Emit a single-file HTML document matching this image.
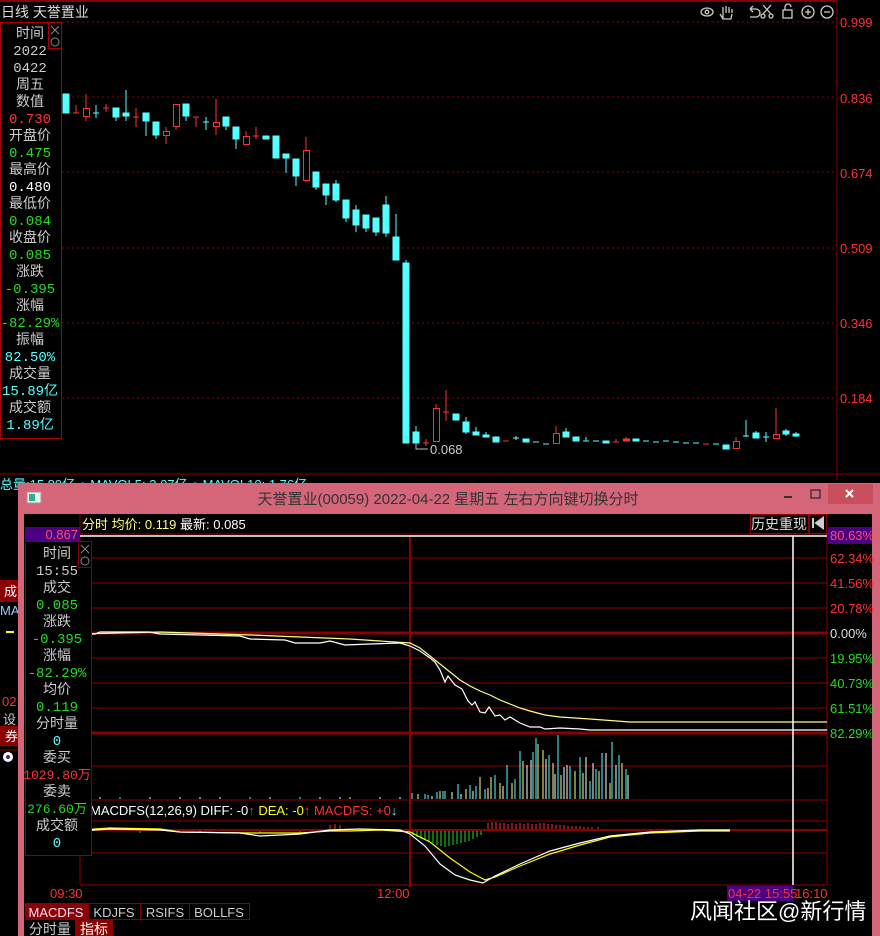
<!DOCTYPE html>
<html><head><meta charset="utf-8"><style>
html,body{margin:0;padding:0;background:#000;width:880px;height:936px;overflow:hidden}
svg{display:block}
text{font-family:"Liberation Sans","Noto Sans CJK SC",sans-serif}
.m text{font-family:"Liberation Mono","Noto Sans CJK SC",monospace}
</style></head><body>
<svg width="880" height="936" viewBox="0 0 880 936" xmlns="http://www.w3.org/2000/svg" font-size="13">
<rect width="880" height="936" fill="#000"/>
<line x1="0" y1="1" x2="836" y2="1" stroke="#8b0000" stroke-width="2"/>
<text x="1" y="17" fill="#ddd" font-size="14">日线  天誉置业</text>
<g stroke="#ccc" fill="none" stroke-width="1.3">
<ellipse cx="707" cy="12" rx="6" ry="4"/><circle cx="707" cy="12" r="1.8"/>
<path d="M723 19v-6m0 0v-6m3 6v-7m3 7v-6m3 6v-4m-12 5l3 5h8l1-5"/>
<path d="M750 9h6a4 4 0 010 8h-6m0-8l3-3m-3 3l3 3"/>
<path d="M763 5l8 9m0-9l-8 9"/><circle cx="763" cy="16" r="2"/><circle cx="771" cy="16" r="2"/>
<rect x="783" y="10" width="9" height="8"/><path d="M785 10v-3a3 3 0 016 0"/>
<circle cx="808" cy="12" r="6"/><path d="M805 12h6m-3-3v6"/>
<circle cx="827" cy="12" r="6"/><path d="M824 12h6"/>
</g>
<line x1="837" y1="0" x2="837" y2="480" stroke="#8b0000"/>
<g stroke="#8b0000" stroke-dasharray="2,3">
<line x1="62" y1="22" x2="836" y2="22"/><line x1="62" y1="97" x2="836" y2="97"/>
<line x1="62" y1="172" x2="836" y2="172"/><line x1="62" y1="248" x2="836" y2="248"/>
<line x1="62" y1="323" x2="836" y2="323"/><line x1="62" y1="398" x2="836" y2="398"/>
</g>
<line x1="0" y1="474" x2="880" y2="474" stroke="#8b0000"/>
<g fill="#ff3232" font-size="13">
<text x="840" y="27">0.999</text><text x="840" y="103">0.836</text><text x="840" y="178">0.674</text>
<text x="840" y="253">0.509</text><text x="840" y="328">0.346</text><text x="840" y="403">0.184</text>
</g>
<g stroke="#54ffff" fill="#54ffff">
<line x1="66" y1="94" x2="66" y2="113"/><rect x="63" y="94" width="6" height="19"/>
<line x1="96" y1="105" x2="96" y2="118"/><line x1="93" y1="113" x2="99" y2="113"/>
<rect x="113" y="108" width="6" height="9"/><line x1="116" y1="117" x2="116" y2="121"/>
<line x1="126" y1="90" x2="126" y2="121"/><rect x="123" y="113" width="6" height="3"/>
<line x1="146" y1="121" x2="146" y2="136"/><rect x="143" y="113" width="6" height="8"/>
<line x1="156" y1="135" x2="156" y2="139"/><rect x="153" y="122" width="6" height="13"/>
<line x1="186" y1="116" x2="186" y2="121"/><rect x="183" y="104" width="6" height="12"/>
<line x1="206" y1="117" x2="206" y2="130"/><line x1="203" y1="122" x2="209" y2="122"/>
<line x1="226" y1="126" x2="226" y2="130"/><rect x="223" y="117" width="6" height="9"/>
<line x1="236" y1="139" x2="236" y2="149"/><rect x="233" y="127" width="6" height="12"/>
<rect x="263" y="136" width="6" height="3"/>
<rect x="273" y="136" width="6" height="22"/>
<line x1="286" y1="158" x2="286" y2="173"/><rect x="283" y="154" width="6" height="4"/>
<line x1="296" y1="176" x2="296" y2="186"/><rect x="293" y="159" width="6" height="17"/>
<line x1="316" y1="187" x2="316" y2="190"/><rect x="313" y="172" width="6" height="15"/>
<line x1="326" y1="195" x2="326" y2="205"/><rect x="323" y="184" width="6" height="11"/>
<line x1="336" y1="180" x2="336" y2="202"/><rect x="333" y="184" width="6" height="16"/>
<line x1="346" y1="218" x2="346" y2="222"/><rect x="343" y="200" width="6" height="18"/>
<line x1="356" y1="205" x2="356" y2="232"/><rect x="353" y="210" width="6" height="15"/>
<line x1="366" y1="228" x2="366" y2="232"/><rect x="363" y="215" width="6" height="13"/>
<line x1="376" y1="232" x2="376" y2="236"/><rect x="373" y="218" width="6" height="14"/>
<line x1="386" y1="196" x2="386" y2="237"/><rect x="383" y="205" width="6" height="28"/>
<line x1="396" y1="214" x2="396" y2="260"/><rect x="393" y="237" width="6" height="23"/>
<line x1="406" y1="260" x2="406" y2="443"/><rect x="403" y="263" width="6" height="180"/>
<line x1="416" y1="426" x2="416" y2="443"/><rect x="413" y="432" width="6" height="11"/>
<rect x="453" y="414" width="6" height="6"/>
<line x1="466" y1="417" x2="466" y2="434"/><rect x="463" y="422" width="6" height="10"/>
<line x1="476" y1="427" x2="476" y2="435"/><rect x="473" y="432" width="6" height="3"/>
<line x1="486" y1="432" x2="486" y2="437"/><rect x="483" y="435" width="6" height="2"/>
<rect x="493" y="437" width="6" height="5"/>
<line x1="513" y1="438" x2="519" y2="438"/><line x1="516" y1="436" x2="516" y2="440"/>
<rect x="523" y="439" width="6" height="3"/>
<line x1="533" y1="442" x2="539" y2="442"/><line x1="543" y1="444" x2="549" y2="444"/>
<line x1="566" y1="428" x2="566" y2="437"/><rect x="563" y="432" width="6" height="5"/>
<rect x="573" y="437" width="6" height="4"/>
<line x1="586" y1="437" x2="586" y2="441"/><line x1="583" y1="441" x2="589" y2="441"/>
<line x1="593" y1="441" x2="599" y2="441"/><rect x="603" y="441" width="6" height="2"/>
<rect x="633" y="439" width="6" height="2"/><line x1="643" y1="441" x2="649" y2="441"/>
<line x1="653" y1="442" x2="659" y2="442"/><line x1="663" y1="441" x2="669" y2="441"/>
<line x1="673" y1="442" x2="679" y2="442"/><line x1="683" y1="443" x2="689" y2="443"/>
<line x1="693" y1="443" x2="699" y2="443"/><line x1="713" y1="444" x2="719" y2="444"/>
<rect x="723" y="445" width="6" height="4"/>
<line x1="746" y1="420" x2="746" y2="437"/><line x1="743" y1="436" x2="749" y2="436"/>
<line x1="756" y1="431" x2="756" y2="438"/><rect x="753" y="433" width="6" height="5"/>
<line x1="766" y1="432" x2="766" y2="442"/><line x1="763" y1="437" x2="769" y2="437"/>
<line x1="786" y1="429" x2="786" y2="436"/><rect x="783" y="431" width="6" height="3"/>
<line x1="796" y1="432" x2="796" y2="437"/><rect x="793" y="434" width="6" height="2"/>
</g>
<g stroke="#ff3232" fill="none">
<line x1="76" y1="105" x2="76" y2="113"/><line x1="73" y1="113" x2="79" y2="113"/>
<line x1="86" y1="94" x2="86" y2="121"/><rect x="83.5" y="108.5" width="6" height="8" fill="#000"/>
<line x1="106" y1="104" x2="106" y2="112"/><line x1="103" y1="108" x2="109" y2="108"/>
<line x1="136" y1="108" x2="136" y2="127"/><line x1="133" y1="117" x2="139" y2="117"/>
<line x1="166" y1="127" x2="166" y2="144"/><rect x="163.5" y="131.5" width="6" height="4" fill="#000"/>
<line x1="176" y1="104" x2="176" y2="130"/><rect x="173.5" y="104.5" width="6" height="22" fill="#000"/>
<line x1="196" y1="117" x2="196" y2="127"/><line x1="193" y1="117" x2="199" y2="117"/>
<line x1="216" y1="99" x2="216" y2="135"/><rect x="213.5" y="122.5" width="6" height="4" fill="#000"/>
<line x1="246" y1="131" x2="246" y2="144"/><rect x="243.5" y="136.5" width="6" height="8" fill="#000"/>
<line x1="256" y1="127" x2="256" y2="139"/><line x1="253" y1="136" x2="259" y2="136"/>
<line x1="306" y1="137" x2="306" y2="182"/><rect x="303.5" y="150.5" width="6" height="30" fill="#000"/>
<line x1="426" y1="439" x2="426" y2="446"/><line x1="423" y1="443" x2="429" y2="443"/>
<line x1="436" y1="404" x2="436" y2="442"/><rect x="433.5" y="408.5" width="6" height="33" fill="#000"/>
<line x1="446" y1="390" x2="446" y2="421"/><line x1="443" y1="412" x2="449" y2="412"/>
<line x1="503" y1="441" x2="509" y2="441"/>
<line x1="556" y1="426" x2="556" y2="444"/><rect x="553.5" y="433.5" width="6" height="10" fill="#000"/>
<line x1="616" y1="439" x2="616" y2="442"/><line x1="613" y1="442" x2="619" y2="442"/>
<line x1="626" y1="437" x2="626" y2="441"/><rect x="623.5" y="439" width="6" height="2" fill="#ff3232"/>
<line x1="703" y1="444" x2="709" y2="444"/>
<line x1="736" y1="437" x2="736" y2="449"/><rect x="733.5" y="441.5" width="6" height="7" fill="#000"/>
<line x1="776" y1="408" x2="776" y2="439"/><rect x="773.5" y="434.5" width="6" height="4" fill="#000"/>
</g>
<path d="M416 443v6h12" stroke="#bbb" fill="none"/>
<text x="430" y="454" fill="#ccc" font-size="13">0.068</text>
<rect x="0.5" y="22.5" width="61" height="416" fill="#000" stroke="#a00"/>
<rect x="48.5" y="22.5" width="13" height="26" fill="#000" stroke="#a00"/>
<path d="M51 26l8 8m0-8l-8 8" stroke="#888"/><circle cx="55" cy="42" r="4" stroke="#888" fill="none"/>
<g font-size="14" text-anchor="middle" class="m">
<text x="30" y="38" fill="#ccc">时间</text><text x="30" y="55" fill="#ccc">2022</text><text x="30" y="72" fill="#ccc">0422</text>
<text x="30" y="89" fill="#ccc">周五</text><text x="30" y="106" fill="#ccc">数值</text><text x="30" y="123" fill="#ff3232">0.730</text>
<text x="30" y="140" fill="#ccc">开盘价</text><text x="30" y="157" fill="#22dd22">0.475</text>
<text x="30" y="174" fill="#ccc">最高价</text><text x="30" y="191" fill="#fff">0.480</text>
<text x="30" y="208" fill="#ccc">最低价</text><text x="30" y="225" fill="#22dd22">0.084</text>
<text x="30" y="242" fill="#ccc">收盘价</text><text x="30" y="259" fill="#22dd22">0.085</text>
<text x="30" y="276" fill="#ccc">涨跌</text><text x="30" y="293" fill="#22dd22">-0.395</text>
<text x="30" y="310" fill="#ccc">涨幅</text><text x="30" y="327" fill="#22dd22">-82.29%</text>
<text x="30" y="344" fill="#ccc">振幅</text><text x="30" y="361" fill="#54ffff">82.50%</text>
<text x="30" y="378" fill="#ccc">成交量</text><text x="30" y="395" fill="#54ffff">15.89亿</text>
<text x="30" y="412" fill="#ccc">成交额</text><text x="30" y="429" fill="#54ffff">1.89亿</text>
</g>
<text x="0" y="489" fill="#54ffff" font-size="13">总量:15.89亿 ● MAVOL5: 3.07亿 ● MAVOL10: 1.76亿</text>
<rect x="0" y="580" width="18" height="22" fill="#8b0000"/><text x="4" y="596" fill="#fff" font-size="13">成</text>
<text x="0" y="615" fill="#9cf" font-size="13">MA</text>
<path d="M6 632h8" stroke="#ff0" stroke-width="2"/>
<text x="2" y="706" fill="#ff3232" font-size="13">02</text>
<text x="3" y="724" fill="#ccc" font-size="13">设</text>
<rect x="0" y="726" width="18" height="20" fill="#8b0000"/><text x="5" y="741" fill="#fff" font-size="13">券</text>
<circle cx="8" cy="757" r="5" fill="#fff"/><circle cx="8" cy="757" r="2" fill="#336"/>
<line x1="0" y1="750" x2="18" y2="750" stroke="#8b0000"/>
<rect x="18" y="483" width="862" height="453" fill="#d5667a"/>
<rect x="27" y="492" width="14" height="11" fill="#eee" stroke="#999"/><rect x="29" y="494" width="6" height="7" fill="#3a8"/>
<text x="448" y="504" fill="#333" font-size="15" text-anchor="middle">天誉置业(00059) 2022-04-22 星期五      左右方向键切换分时</text>
<path d="M784 497h8" stroke="#333" stroke-width="2"/>
<rect x="811" y="490" width="9" height="8" fill="none" stroke="#333" stroke-width="1.4"/>
<rect x="828" y="484" width="45" height="20" fill="#c94f5c"/>
<path d="M846 490l7 7m0-7l-7 7" stroke="#fff" stroke-width="2"/>
<rect x="24" y="514" width="848" height="422" fill="#000"/>
<line x1="80" y1="514" x2="80" y2="535" stroke="#8b0000"/>
<text x="82" y="529" fill="#ffff80" font-size="13">分时 均价: 0.119 <tspan fill="#fff">最新: 0.085</tspan></text>
<rect x="750.5" y="514.5" width="58" height="19" fill="#000" stroke="#8b0000"/>
<text x="779" y="529" fill="#ddd" font-size="14" text-anchor="middle">历史重现</text>
<rect x="809.5" y="514.5" width="17" height="19" fill="#000" stroke="#8b0000"/>
<path d="M813 518v10M823 518l-7 5 7 5z" stroke="#ccc" fill="#ccc" stroke-width="2"/>
<line x1="80" y1="534" x2="827" y2="534" stroke="#8b0000"/>
<rect x="25" y="527" width="55" height="14" fill="#4b0082"/>
<text x="78" y="539" fill="#ff4d6d" font-size="13" text-anchor="end">0.867</text>
<rect x="828" y="527" width="44" height="17" fill="#4b0082"/>
<g stroke="#8b0000">
<line x1="80" y1="558" x2="827" y2="558"/><line x1="80" y1="583" x2="827" y2="583"/>
<line x1="80" y1="608" x2="827" y2="608"/><line x1="80" y1="633" x2="827" y2="633" stroke-width="3"/>
<line x1="80" y1="658" x2="827" y2="658"/><line x1="80" y1="683" x2="827" y2="683"/>
<line x1="80" y1="708" x2="827" y2="708"/><line x1="80" y1="733" x2="827" y2="733" stroke-width="3"/>
<line x1="80" y1="766" x2="827" y2="766"/><line x1="24" y1="800" x2="827" y2="800"/>
<line x1="80" y1="821" x2="827" y2="821"/><line x1="80" y1="830" x2="827" y2="830" stroke-width="2"/>
<line x1="80" y1="853" x2="827" y2="853"/><line x1="80" y1="885" x2="827" y2="885"/>
<line x1="410" y1="536" x2="410" y2="887" stroke-width="2"/>
<line x1="827" y1="534" x2="827" y2="885"/>
<line x1="80" y1="534" x2="80" y2="885"/>
</g>
<line x1="80" y1="536" x2="827" y2="536" stroke="#fff" stroke-width="1.5"/>
<line x1="793" y1="536" x2="793" y2="885" stroke="#fff" stroke-width="1.5"/>
<g font-size="13">
<text x="830" y="540" fill="#ff4d6d">80.63%</text>
<text x="830" y="563" fill="#ff3232">62.34%</text><text x="830" y="588" fill="#ff3232">41.56%</text>
<text x="830" y="613" fill="#ff3232">20.78%</text><text x="830" y="638" fill="#ddd">0.00%</text>
<text x="830" y="663" fill="#22dd22">19.95%</text><text x="830" y="688" fill="#22dd22">40.73%</text>
<text x="830" y="713" fill="#22dd22">61.51%</text><text x="830" y="738" fill="#22dd22">82.29%</text>
</g>
<polyline fill="none" stroke="#ffff80" stroke-width="1.2" points="80,634 160,632 250,635 300,637 350,639 380,641 410,643 420,648 430,656 440,664 450,672 460,680 470,686 480,691 490,695 500,700 510,704 520,708 530,711 545,715 560,717 590,719 630,722 827,722"/>
<polyline fill="none" stroke="#fff" stroke-width="1.2" points="80,635 95,634 100,632 150,632 160,634 240,636 250,639 285,640 295,643 320,643 330,641 345,645 370,644 400,643 410,646 420,651 430,658 435,662 440,670 445,682 448,676 455,685 462,689 468,701 472,705 475,702 480,712 485,713 489,707 495,716 500,715 505,720 510,717 520,723 530,727 540,727 545,729 560,728 580,729 590,730 827,730"/>
<g stroke="#54ffff">
<path d="M412 799v-6M425 799v-5M437 799v-7M445 799v-8M458 799v-15M470 799v-14M476 799v-13M485 799v-10M495 799v-24M507 799v-34M515 799v-20M520 799v-48M533 799v-47M536 799v-61M549 799v-44M558 799v-64M570 799v-33M580 799v-42M596 799v-30M602 799v-46M612 799v-57M619 799v-44M626 799v-30M590 799v-18M443 799v-8M428 799v-4M120 799v-2M300 799v-2M250 799v-2"/>
</g>
<g stroke="#ffff80">
<path d="M418 799v-5M440 799v-8M466 799v-10M480 799v-22M491 799v-22M500 799v-16M512 799v-16M523 799v-38M538 799v-55M543 799v-49M553 799v-36M561 799v-24M575 799v-28M583 799v-26M599 799v-28M610 799v-16M622 799v-36M200 799v-2M350 799v-2"/>
</g>
<g stroke="#fff">
<path d="M432 799v-3M452 799v-7M461 799v-5M473 799v-8M488 799v-11M503 799v-13M527 799v-34M531 799v-39M546 799v-40M555 799v-25M564 799v-32M567 799v-34M586 799v-42M593 799v-36M606 799v-46M616 799v-34M628 799v-24M100 799v-2M150 799v-2M180 799v-2M220 799v-2M270 799v-2M320 799v-2M340 799v-2M380 799v-2M400 799v-2"/>
</g>
<text x="90" y="815" fill="#fff" font-size="13">MACDFS(12,26,9) DIFF: -0<tspan fill="#ff3232">↑</tspan> <tspan fill="#ffff00">DEA: -0</tspan><tspan fill="#ff3232">↑ MACDFS: +0</tspan><tspan fill="#54ffff">↓</tspan></text>
<g stroke="#22dd22">
<path d="M413 831v4M417 831v6M421 831v8M425 831v9M429 831v11M433 831v12M437 831v14M441 831v15M445 831v16M449 831v15M453 831v14M457 831v13M461 831v12M465 831v11M469 831v10M473 831v8M477 831v6M481 831v4M140 831v2M200 831v2M260 831v2M300 831v2"/>
</g>
<g stroke="#ff3232">
<path d="M488 829v-6M492 829v-7M496 829v-7M500 829v-6M504 829v-6M508 829v-5M512 829v-6M516 829v-5M520 829v-6M524 829v-5M528 829v-6M532 829v-5M536 829v-5M540 829v-6M544 829v-6M548 829v-5M552 829v-5M556 829v-4M560 829v-4M564 829v-4M568 829v-3M572 829v-3M576 829v-3M580 829v-3M584 829v-2M588 829v-2M592 829v-2M598 829v-2M330 829v-4M335 829v-5M340 829v-4M100 829v-1M110 829v-2"/>
</g>
<polyline fill="none" stroke="#ffff00" stroke-width="1.2" points="80,830 110,828 160,829 180,832 250,833 300,833 330,831 350,831 380,830 410,832 430,842 450,858 470,872 485,880 495,877 520,866 550,854 580,845 610,837 650,833 700,831 730,831"/>
<polyline fill="none" stroke="#fff" stroke-width="1.2" points="80,831 110,829 160,830 180,832 240,833 260,836 300,834 330,830 360,829 400,830 410,834 425,846 440,864 455,875 470,880 483,883 495,876 520,864 550,851 580,843 610,836 650,832 700,830 730,830"/>
<rect x="25.5" y="541.5" width="66" height="314" fill="#000" stroke="#8b0000"/>
<rect x="78.5" y="541.5" width="13" height="26" fill="#000" stroke="#8b0000"/>
<path d="M81 545l8 8m0-8l-8 8" stroke="#888"/><circle cx="85" cy="561" r="4" stroke="#888" fill="none"/>
<g font-size="14" text-anchor="middle" class="m">
<text x="57" y="558" fill="#ccc">时间</text><text x="57" y="575" fill="#ccc">15:55</text>
<text x="57" y="592" fill="#ccc">成交</text><text x="57" y="609" fill="#22dd22">0.085</text>
<text x="57" y="626" fill="#ccc">涨跌</text><text x="57" y="643" fill="#22dd22">-0.395</text>
<text x="57" y="660" fill="#ccc">涨幅</text><text x="57" y="677" fill="#22dd22">-82.29%</text>
<text x="57" y="694" fill="#ccc">均价</text><text x="57" y="711" fill="#22dd22">0.119</text>
<text x="57" y="728" fill="#ccc">分时量</text><text x="57" y="745" fill="#54ffff">0</text>
<text x="57" y="762" fill="#ccc">委买</text><text x="57" y="779" fill="#ff3232" font-size="13">1029.80万</text>
<text x="57" y="796" fill="#ccc">委卖</text><text x="57" y="813" fill="#22dd22" font-size="13">276.60万</text>
<text x="57" y="830" fill="#ccc">成交额</text><text x="57" y="847" fill="#54ffff">0</text>
</g>
<text x="50" y="898" fill="#ff3232" font-size="13">09:30</text>
<text x="377" y="898" fill="#ff3232" font-size="13">12:00</text>
<rect x="727" y="886" width="66" height="15" fill="#4b0082"/>
<text x="728" y="898" fill="#ff3232" font-size="13">04-22 15:55</text>
<text x="795" y="898" fill="#ff3232" font-size="13">16:10</text>
<rect x="25" y="903" width="63" height="17" fill="#8b0000"/>
<rect x="88.5" y="903.5" width="52" height="16" fill="#000" stroke="#8b0000"/>
<rect x="140.5" y="903.5" width="49" height="16" fill="#000" stroke="#8b0000"/>
<rect x="189.5" y="903.5" width="60" height="16" fill="#000" stroke="#8b0000"/>
<g font-size="13" text-anchor="middle">
<text x="56" y="917" fill="#fdf">MACDFS</text><text x="114" y="917" fill="#ccc">KDJFS</text>
<text x="165" y="917" fill="#ccc">RSIFS</text><text x="219" y="917" fill="#ccc">BOLLFS</text>
</g>
<rect x="75" y="920" width="38" height="16" fill="#8b0000"/>
<text x="50" y="934" fill="#ccc" font-size="14" text-anchor="middle">分时量</text>
<text x="94" y="934" fill="#fff" font-size="14" text-anchor="middle">指标</text>
<text x="690" y="919" fill="#fff" font-size="22">风闻社区@新行情</text>
</svg>
</body></html>
